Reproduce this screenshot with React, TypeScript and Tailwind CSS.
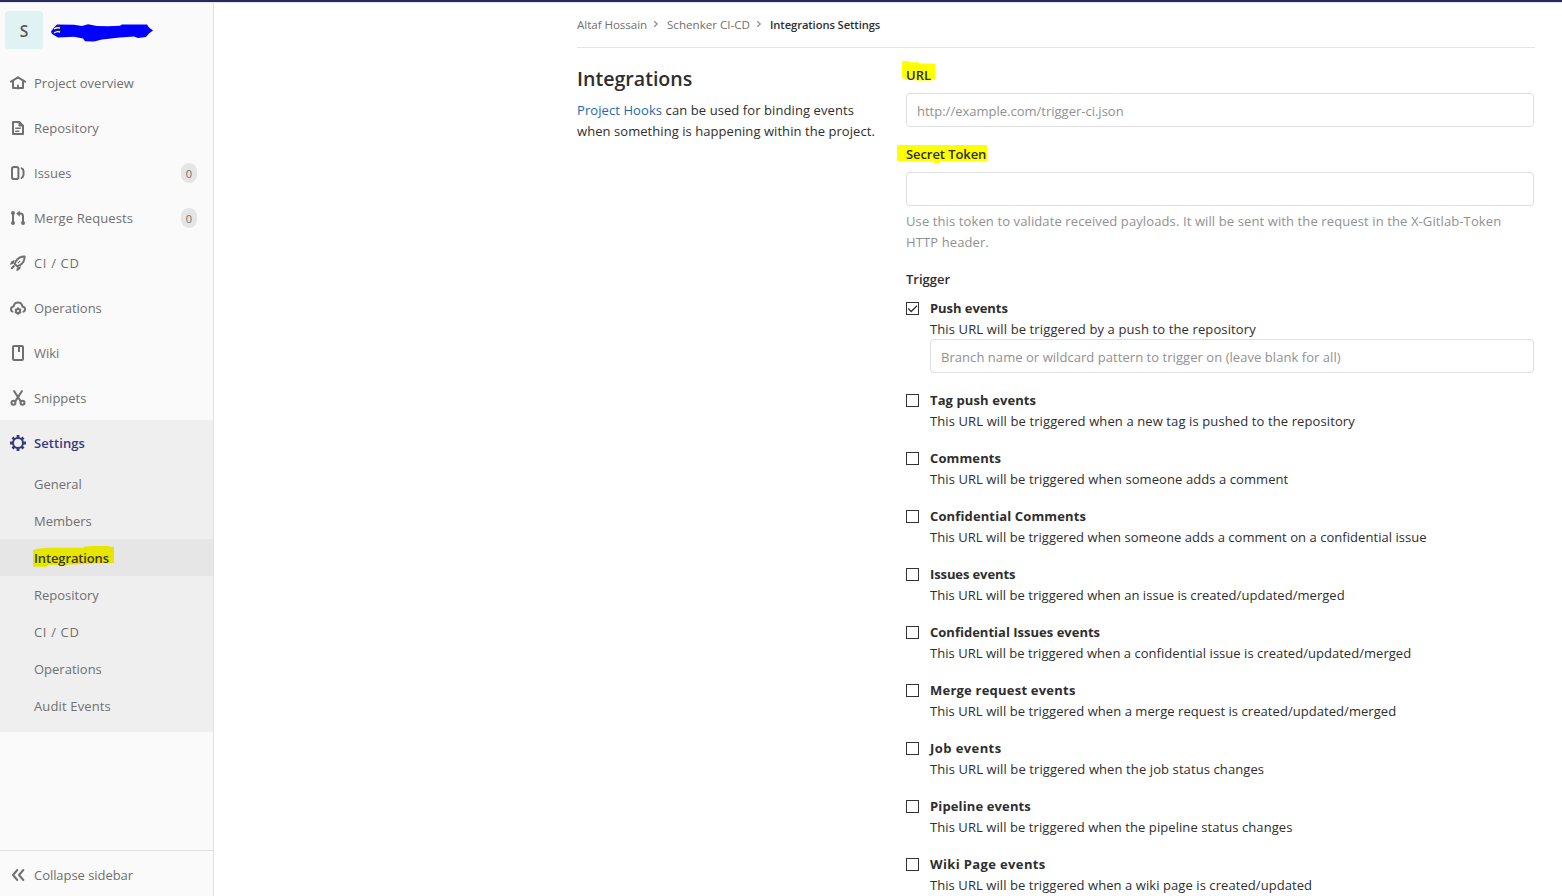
import type { ReactNode } from "react";

function Icon({ children }: { children: ReactNode }) {
  return (
    <svg
      viewBox="0 0 16 16"
      className="h-4 w-4 shrink-0"
      fill="none"
      stroke="currentColor"
      strokeWidth="2"
    >
      {children}
    </svg>
  );
}

const HomeIcon = () => (
  <Icon>
    <path d="M1 6.600 8 2.300l7 4.300" strokeLinecap="round" strokeLinejoin="round" />
    <path d="M3 6v7h10V6" strokeLinejoin="round" />
    <path d="M8 10.500v3" strokeLinecap="round" />
  </Icon>
);

const DocIcon = () => (
  <Icon>
    <path d="M3 2h6.4L13 5.6V14H3z" strokeLinejoin="round" />
    <path d="M9 2v4h4z" fill="currentColor" strokeWidth="1" />
    <path d="M5.200 8.300h5.600M5.200 11.300h4" strokeWidth="1.5" />
  </Icon>
);

const IssuesIcon = () => (
  <Icon>
    <rect x="2" y="2" width="6.400" height="12" rx="1.800" />
    <path d="M11.600 3.400c1.400.5 1.900 1.200 1.900 2.600v3.400c0 1.700-.6 2.800-1.900 3.600" strokeLinecap="round" />
  </Icon>
);

const MergeIcon = () => (
  <Icon>
    <path d="M3 3v10" />
    <circle cx="3" cy="3" r="2" fill="currentColor" stroke="none" />
    <circle cx="3" cy="13" r="2" fill="currentColor" stroke="none" />
    <path d="M9 3.600h1.400C12.200 3.600 13 4.800 13 6.400V13" />
    <path d="M6.200 3.600 9.800.5v6.200z" fill="currentColor" stroke="none" />
    <circle cx="13" cy="13" r="2" fill="currentColor" stroke="none" />
  </Icon>
);

const RocketIcon = () => (
  <Icon>
    <path d="M14.600 1.400c-3.800-.1-6.600 1.400-8.400 4.300L4.700 8.900l2.400 2.400 3.200-1.500c2.900-1.800 4.400-4.600 4.300-8.400z" strokeLinejoin="round" />
    <path d="m8.200 7.800 1.600-1.600" strokeWidth="1.200" strokeLinecap="round" />
    <path d="M4.800 5C2.200 5.200.4 6.800 0 9.800l3.400-.9z" fill="currentColor" stroke="none" />
    <path d="M11 11.200c-.2 2.600-1.800 4.400-4.800 4.800l.9-3.400z" fill="currentColor" stroke="none" />
    <path d="m3.800 11.200-2 2" strokeWidth="2.200" strokeLinecap="round" />
  </Icon>
);

const OperationsIcon = () => (
  <Icon>
    <path d="M2.500 11.600C1.500 11.200 1 10.400 1 9.400c0-1.600 1.100-2.700 2.600-2.900C4 4 5.700 2.500 8 2.500s4 1.500 4.400 4c1.500.2 2.600 1.300 2.600 2.900 0 1-.5 1.800-1.500 2.200" strokeLinecap="round" strokeLinejoin="round" />
    <circle cx="8" cy="11" r="2.100" />
    <path d="M8 7.300v1.500M8 13.200v1.500M4.900 9.200l1.200.7M9.900 12.100l1.200.7M11.100 9.200l-1.200.7M6.100 12.100l-1.200.7" strokeWidth="1.600" />
  </Icon>
);

const BookIcon = () => (
  <Icon>
    <rect x="3" y="1" width="10" height="14" rx="1" />
    <path d="M9 1v6" />
  </Icon>
);

const ScissorsIcon = () => (
  <Icon>
    <path d="m4.200 1.200 6.600 10.300M11.800 1.200 5.200 11.500" strokeLinecap="round" strokeWidth="2.100" />
    <circle cx="3.500" cy="12.700" r="2" />
    <circle cx="12.500" cy="12.700" r="2" />
  </Icon>
);

const GearIcon = () => (
  <Icon>
    <circle cx="8" cy="8" r="5" />
    <path
      d="M8 0v3M8 13v3M0 8h3M13 8h3M2.500 2.500l2 2M11.500 11.500l2 2M13.500 2.500l-2 2M4.500 11.500l-2 2"
      strokeWidth="2.800"
    />
  </Icon>
);

const CollapseIcon = () => (
  <Icon>
    <path d="M7.300 3 3 8l4.300 5M13.300 3 9 8l4.300 5" strokeLinecap="round" strokeLinejoin="round" />
  </Icon>
);

type NavEntry = { label: string; icon: ReactNode; count?: number; tracking?: string };

const nav: NavEntry[] = [
  { label: "Project overview", icon: <HomeIcon /> },
  { label: "Repository", icon: <DocIcon /> },
  { label: "Issues", icon: <IssuesIcon />, count: 0 },
  { label: "Merge Requests", icon: <MergeIcon />, count: 0, tracking: "tracking-[0.1px]" },
  { label: "CI / CD", icon: <RocketIcon />, tracking: "tracking-[0.65px]" },
  { label: "Operations", icon: <OperationsIcon /> },
  { label: "Wiki", icon: <BookIcon /> },
  { label: "Snippets", icon: <ScissorsIcon /> },
];

const settingsNav = [
  { label: "General" },
  { label: "Members" },
  { label: "Integrations", active: true },
  { label: "Repository" },
  { label: "CI / CD", tracking: "tracking-[0.65px]" },
  { label: "Operations" },
  { label: "Audit Events", tracking: "tracking-[0.14px]" },
];

function Sidebar() {
  return (
    <aside className="flex w-[214px] shrink-0 flex-col border-r border-[#e1e1e1] bg-[#fafafa] text-[#707070]">
      <div className="relative flex h-[57px] items-start pt-2 pl-[5px]">
        <div className="flex h-[38px] w-[38px] items-center justify-center rounded-[4px] bg-[#e0f2f1] pt-0.5 text-[15.5px] font-semibold text-[#555]">
          S
        </div>
        <svg className="absolute top-5 left-[50px] h-[20px] w-[105px]" viewBox="0 0 105 20">
          <path
            d="M7 1.500 24 1.800 32 3 38 1.300 47 3 58 3.200 70 2.700 72 1.500H97L99 4.500 103 7.500 99 10.500 96 14 88 15 84 13.500 70 14.500 52 16.500 44 18.500 35 18.300 33 15.500 24 13.800 8 14.500 2 11 1 8.500 4 4.500z"
            fill="#0000ff"
          />
          <path d="M4 6c2-1.500 3-1.500 6-1M4 10c2-1.500 3-2 6-1" fill="none" stroke="#fafafa" strokeWidth="1.400" />
          <path d="M5 4c2-1.500 4-1.500 6 0M6 7.500h5" fill="none" stroke="#333" strokeWidth="1" />
        </svg>
      </div>

      <nav className="flex flex-col">
        {nav.map((n) => (
          <a key={n.label} className="flex h-[45px] items-center pt-px pr-4 pl-2.5">
            {n.icon}
            <span className={`mt-px ml-2 flex-1 ${n.tracking ?? ""}`}>{n.label}</span>
            {n.count !== undefined && (
              <span className="flex h-5 w-4 items-center justify-center rounded-full bg-[#e5e5e5] pt-px text-[11px]">
                {n.count}
              </span>
            )}
          </a>
        ))}
        <div className="bg-[#efefef] pb-2">
          <a className="flex h-[45px] items-center pt-px pl-2.5 text-[#393982]">
            <GearIcon />
            <span className="mt-px ml-2 font-semibold tracking-[0.08px]">Settings</span>
          </a>
          {settingsNav.map((s) =>
            s.active ? (
              <a
                key={s.label}
                className="relative isolate flex h-[37px] items-center bg-[#e6e6e6] pt-0.5 pl-[34px] font-semibold tracking-[-0.13px] text-[#3a3a10]"
              >
                <svg className="absolute top-[7px] left-[33px] -z-10 h-[22px] w-[81px]" viewBox="0 0 81 22">
                  <path d="M0 4 6 2.500 16 1.800 50 1.800 52 .5 60 0H76V.8H81V17H68L50 18 30 19H14V20.800H0z" fill="#e6e600" />
                </svg>
                {s.label}
              </a>
            ) : (
              <a key={s.label} className={`flex h-[37px] items-center pt-0.5 pl-[34px] ${s.tracking ?? ""}`}>
                {s.label}
              </a>
            ),
          )}
        </div>
      </nav>

      <button className="mt-auto flex h-[46px] items-center border-t border-[#e1e1e1] pt-[3px] pl-2.5">
        <CollapseIcon />
        <span className="ml-2 tracking-[-0.05px]">Collapse sidebar</span>
      </button>
    </aside>
  );
}

function Chevron() {
  return (
    <span className="flex w-5 justify-center pr-0.5">
      <svg viewBox="0 0 6 8" className="h-2 w-1.5" fill="none" stroke="#8c8c8c" strokeWidth="1.200">
        <path d="M1.200 1.200 4.200 4 1.200 6.800" />
      </svg>
    </span>
  );
}

type HookEvent = { title: string; text: string; checked?: boolean; titleTracking: string; textTracking: string };

const events: HookEvent[] = [
  { title: "Push events", text: "by a push to the repository", checked: true, titleTracking: "tracking-[-0.06px]", textTracking: "tracking-[0.12px]" },
  { title: "Tag push events", text: "when a new tag is pushed to the repository", titleTracking: "tracking-[0.1px]", textTracking: "tracking-[0.11px]" },
  { title: "Comments", text: "when someone adds a comment", titleTracking: "tracking-[0.12px]", textTracking: "tracking-[0.08px]" },
  { title: "Confidential Comments", text: "when someone adds a comment on a confidential issue", titleTracking: "tracking-[0.13px]", textTracking: "tracking-[0.05px]" },
  { title: "Issues events", text: "when an issue is created/updated/merged", titleTracking: "tracking-[-0.11px]", textTracking: "tracking-[0.04px]" },
  { title: "Confidential Issues events", text: "when a confidential issue is created/updated/merged", titleTracking: "tracking-[0.01px]", textTracking: "tracking-[0.03px]" },
  { title: "Merge request events", text: "when a merge request is created/updated/merged", titleTracking: "tracking-[0.22px]", textTracking: "tracking-[0.055px]" },
  { title: "Job events", text: "when the job status changes", titleTracking: "tracking-[0.42px]", textTracking: "tracking-[0.1px]" },
  { title: "Pipeline events", text: "when the pipeline status changes", titleTracking: "tracking-[0.13px]", textTracking: "tracking-[0.075px]" },
  { title: "Wiki Page events", text: "when a wiki page is created/updated", titleTracking: "tracking-[0.37px]", textTracking: "tracking-[0.07px]" },
];

const field =
  "block h-[34px] w-full rounded-[4px] border border-[#dfdfdf] bg-white px-2.5 pt-0.5 placeholder:text-[#919191]";

function Checkbox({ checked }: { checked?: boolean }) {
  return (
    <span className="mt-1 flex h-[13px] w-[13px] shrink-0 border border-[#333] bg-white">
      {checked && (
        <svg viewBox="0 0 11 11" className="h-[11px] w-[11px]" fill="none" stroke="#333" strokeWidth="1.300">
          <path d="M1.200 5.500 4.200 8.500 10 2.700" />
        </svg>
      )}
    </span>
  );
}

export default function App() {
  return (
    <div className="flex h-[896px] w-[1562px] flex-col overflow-hidden bg-white font-['Open_Sans','Noto_Sans',sans-serif] text-[13px] leading-[21px] text-[#2e2e2e]">
      <div className="h-[3px] shrink-0 border-b border-[#e5e5e5] bg-[#292961]" />
      <div className="flex min-h-0 flex-1">
        <Sidebar />
        <main className="ml-[363px] w-[958px]">
          <div className="flex h-[45px] items-center border-b border-[#e5e5e5] pb-0.5 text-[11.6px] text-[#707070]">
            <span className="w-[70px] tracking-[-0.05px] whitespace-nowrap">Altaf Hossain</span>
            <Chevron />
            <span className="w-[83px] whitespace-nowrap">Schenker CI-CD</span>
            <Chevron />
            <span className="text-[11.2px] font-semibold tracking-[-0.09px] text-[#2e2e2e]">Integrations Settings</span>
          </div>
          <div className="flex pr-px">
            <section className="w-[329px] shrink-0 pt-[18px]">
              <h4 className="text-[19.600px] leading-[26px] font-semibold">Integrations</h4>
              <p className="mt-2 tracking-[0.06px] whitespace-nowrap">
                <span className="tracking-[0.085px]">
                  <a className="text-[#1b69b6]">Project Hooks</a> can be used for binding events
                </span>
                <br />
                when something is happening within the project.
              </p>
            </section>
            <section className="min-w-0 flex-1 pt-[17px]">
              <label className="relative isolate mb-[7px] block font-semibold">
                <svg className="absolute -top-[4px] -left-[4px] -z-10 h-[20px] w-[33px]" viewBox="0 0 33 20">
                  <path d="M0 0H7V1.300H17V2.500H33V18.300H30V19.500H14V18.300H4L0 17z" fill="#ffff00" />
                </svg>
                URL
              </label>
              <input className={field} placeholder="http://example.com/trigger-ci.json" />
              <label className="relative isolate mt-[17px] mb-[7px] block font-semibold tracking-[-0.08px]">
                <svg className="absolute top-px -left-[9px] -z-10 h-[18px] w-[90px]" viewBox="0 0 90 18">
                  <path d="M0 0H90V16H43V18H37V16H0z" fill="#ffff00" />
                </svg>
                Secret Token
              </label>
              <input className={field} />
              <p className="mt-[5px] mb-4 tracking-[0.11px] text-[#919191]">
                Use this token to validate received payloads. It will be sent with the request in the X-Gitlab-Token
                <br />
                HTTP header.
              </p>
              <div className="mb-2 font-semibold">Trigger</div>
              {events.map((e) => (
                <div key={e.title} className={`flex ${e.checked ? "mb-[17px]" : "mb-4"}`}>
                  <Checkbox checked={e.checked} />
                  <div className="ml-[11px] flex-1">
                    <div className={`font-bold ${e.titleTracking}`}>{e.title}</div>
                    <p className={e.textTracking}>This URL will be triggered {e.text}</p>
                    {e.checked && (
                      <input
                        className={`${field} -mt-px tracking-[0.05px]`}
                        placeholder="Branch name or wildcard pattern to trigger on (leave blank for all)"
                      />
                    )}
                  </div>
                </div>
              ))}
            </section>
          </div>
        </main>
      </div>
    </div>
  );
}
